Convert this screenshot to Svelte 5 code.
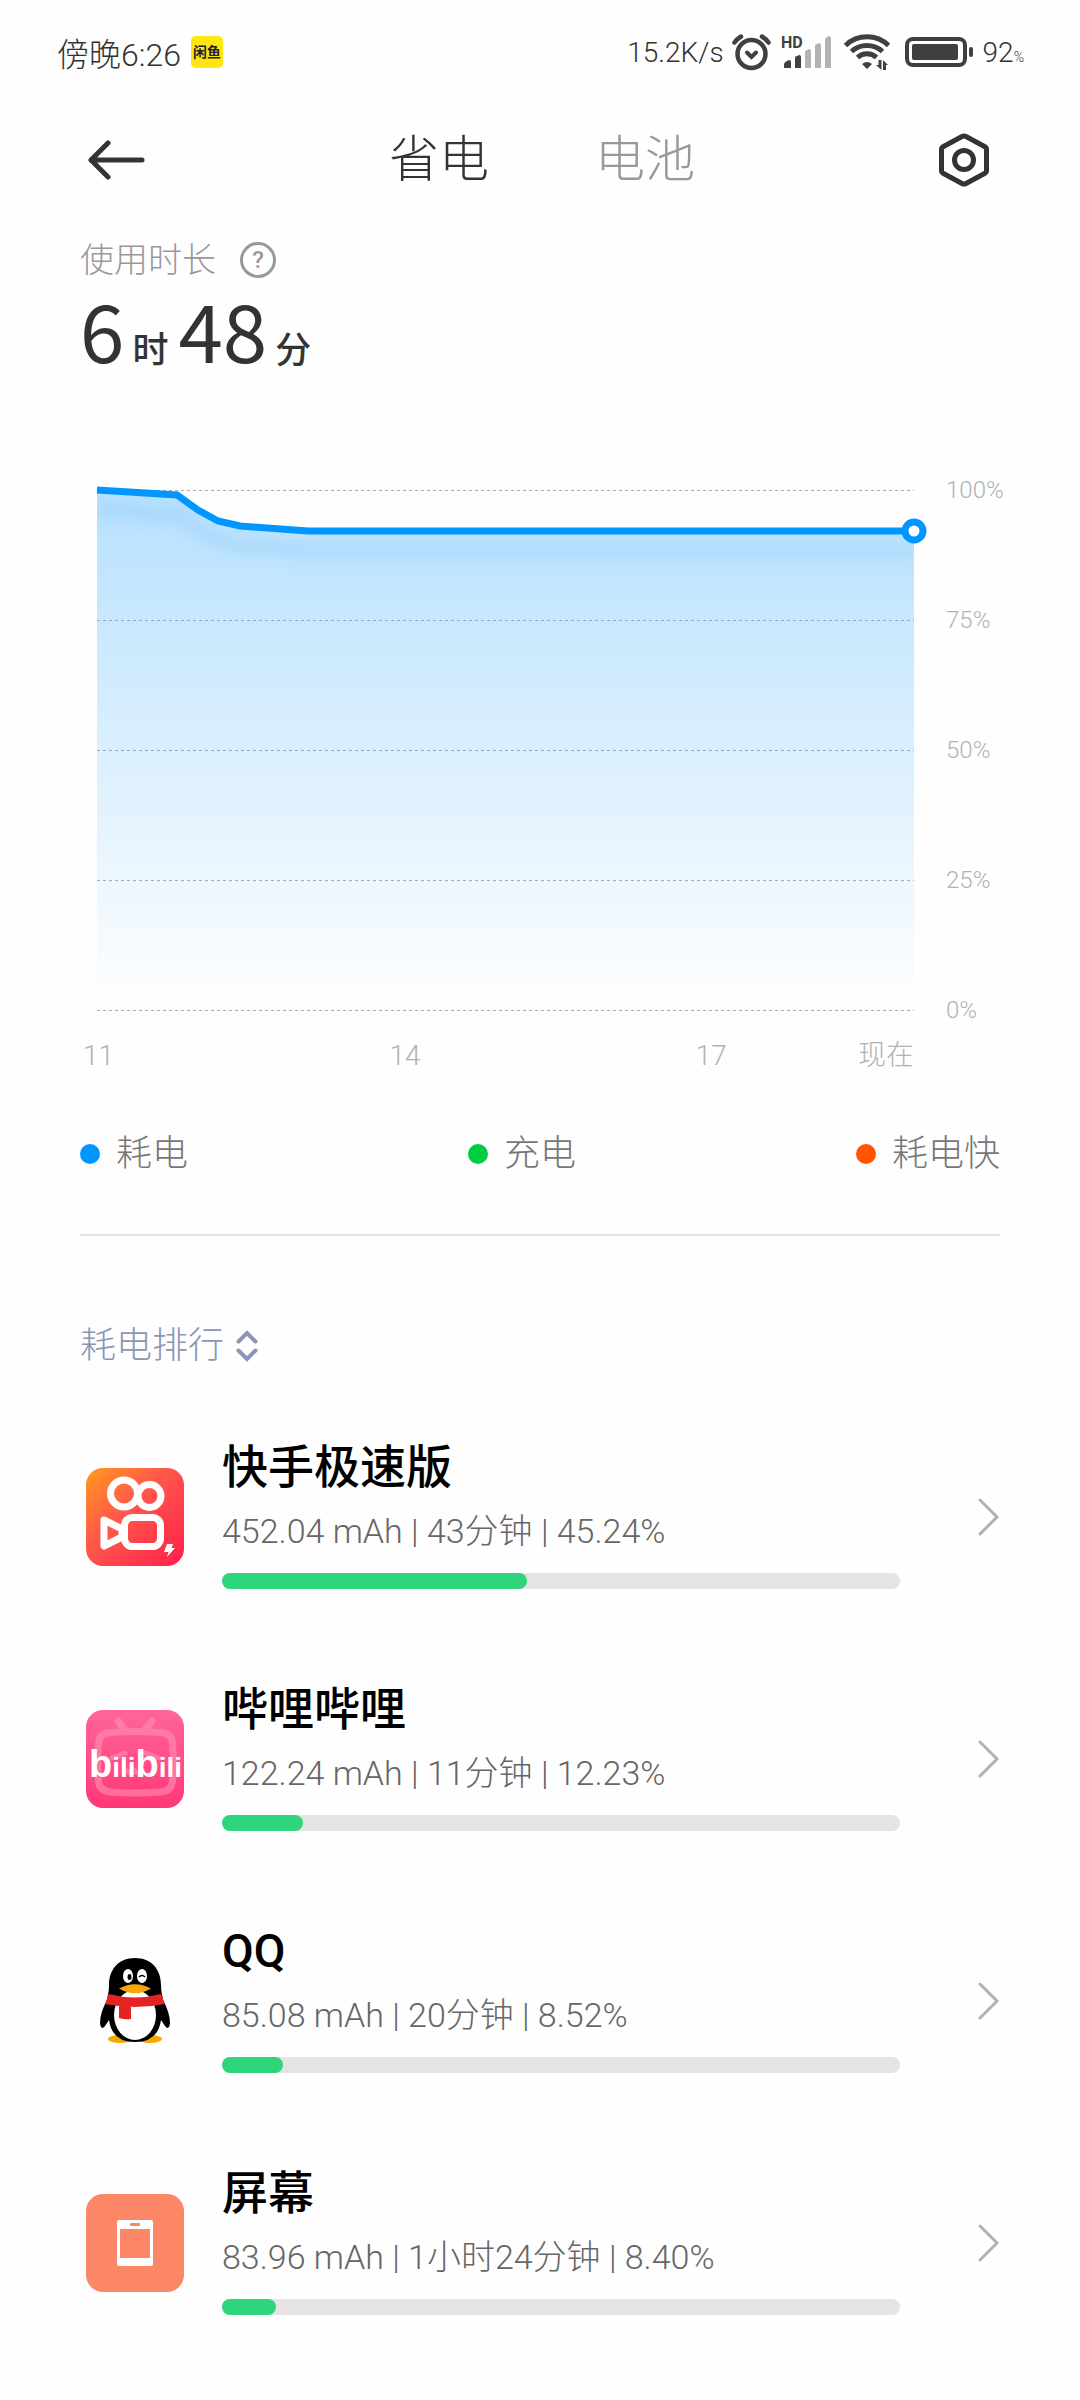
<script lang="ts">
  type App = {
    id: 'kuaishou' | 'bilibili' | 'qq' | 'screen';
    name: string;
    usage: string;
    time: string;
    percent: string;
  };

  const apps: App[] = [
    { id: 'kuaishou', name: '快手极速版', usage: '452.04 mAh', time: '43分钟', percent: '45.24' },
    { id: 'bilibili', name: '哔哩哔哩', usage: '122.24 mAh', time: '11分钟', percent: '12.23' },
    { id: 'qq', name: 'QQ', usage: '85.08 mAh', time: '20分钟', percent: '8.52' },
    { id: 'screen', name: '屏幕', usage: '83.96 mAh', time: '1小时24分钟', percent: '8.40' }
  ];

  const legend = [
    { label: '耗电', kind: 'drain' },
    { label: '充电', kind: 'charge' },
    { label: '耗电快', kind: 'fast' }
  ];

  const tabs = ['省电', '电池'];
  const levels = [100, 75, 50, 25, 0];

  // battery level over time, in plot units
  const points = [
    [0, 0],
    [80, 5],
    [101, 20],
    [121, 31],
    [143, 36],
    [211, 41],
    [817, 41]
  ];
  const line = points.map((p) => p.join(',')).join(' ');
  const area = `${line} 817,520 0,520`;

  let activeTab = '省电';
</script>

<div class="page">
  <div class="status">
    <div class="status-side clock">
      <span>傍晚6:26</span>
      <span class="notice">闲鱼</span>
    </div>
    <div class="status-side">
      <span>15.2K/s</span>
      <svg class="alarm" width="43" height="40" viewBox="0 0 43 40" fill="none" stroke="#404040">
        <circle cx="21.5" cy="22" r="14" stroke-width="4.5" />
        <path d="M17 20.5l4.5 4.5 4.5-4.5" stroke-width="4" stroke-linecap="round" />
        <path d="M4.5 10.5Q7 7 11 4.5M38.5 10.5Q36 7 32 4.5" stroke-width="4.5" stroke-linecap="round" />
      </svg>
      <svg class="signal" width="52" height="42" viewBox="0 -4 52 42">
        <text x="0" y="13" font-size="16" font-weight="700" fill="#404040">HD</text>
        <path d="M3 33v-3q0-3 3-4l2-1q2 0 2 2v6zM14 33V23q0-2 2-2l2-1q2 0 2 2v11z" fill="#404040" />
        <path d="M24 33V17q0-2 2-2l2-1q2 0 2 2v17zM34 33V11q0-2 2-2l2-1q2 0 2 2v23zM44 33V5q0-2 2-3l2-1q2 0 2 2v30z" fill="#b3b3b3" />
      </svg>
      <svg class="wifi" width="48" height="38" viewBox="0 0 48 38">
        <g fill="none" stroke="#404040" stroke-width="5">
          <path d="M2.500 12.500A31 31 0 0 1 45.500 12.500" />
          <path d="M8.500 18.500A23 23 0 0 1 39.500 18.500" />
          <path d="M14.500 24.500A14 14 0 0 1 33.500 24.500" />
        </g>
        <path d="M19 31q5-4 10 0l-5 5zM33 32h2.500v-5h3v10zM40 37V27l5 5h-2v5z" fill="#404040" />
      </svg>
      <svg class="battery" width="70" height="30" viewBox="0 0 70 30">
        <rect x="2" y="2" width="58" height="26" rx="6" fill="none" stroke="#404040" stroke-width="4" />
        <rect x="7" y="7" width="46" height="16" rx="2" fill="#404040" />
        <rect x="64" y="10" width="4" height="10" rx="2" fill="#404040" />
      </svg>
      <span>92<small>%</small></span>
    </div>
  </div>

  <header class="topbar">
    <button class="icon-button" aria-label="返回">
      <svg width="57" height="40" viewBox="0 0 57 40" fill="none" stroke="#333" stroke-width="5" stroke-linecap="round" stroke-linejoin="round">
        <path d="M54 20H3M20 3L3 20l17 17" />
      </svg>
    </button>
    <nav class="tabs">
      {#each tabs as tab}
        <button class="tab" class:active={tab === activeTab} on:click={() => (activeTab = tab)}>{tab}</button>
      {/each}
    </nav>
    <button class="icon-button" aria-label="设置">
      <svg width="50" height="54" viewBox="0 0 50 54" fill="none" stroke="#333" stroke-width="5" stroke-linejoin="round">
        <path d="M23 3.500Q25 2.400 27 3.500L45.500 13.500Q47.500 14.700 47.500 16.500V37.500Q47.500 39.300 45.500 40.500L27 50.500Q25 51.600 23 50.500L4.500 40.500Q2.500 39.300 2.500 37.500V16.500Q2.500 14.700 4.500 13.500Z" />
        <circle cx="25" cy="27" r="9.500" />
      </svg>
    </button>
  </header>

  <main>
    <section>
      <div class="caption">
        <span>使用时长</span>
        <button class="help" aria-label="说明">?</button>
      </div>
      <div class="duration">
        <strong>6</strong><span>时</span><strong>48</strong><span>分</span>
      </div>
    </section>

    <section class="chart">
      <svg class="plot" viewBox="0 0 817 520" role="img" aria-label="电量曲线">
        <defs>
          <linearGradient id="fill" x1="0" y1="0" x2="0" y2="1">
            <stop offset="0" stop-color="#0095ff" stop-opacity="0.28" />
            <stop offset="1" stop-color="#0095ff" stop-opacity="0" />
          </linearGradient>
          <filter id="soft" x="-10%" y="-50%" width="120%" height="250%">
            <feGaussianBlur stdDeviation="6" />
          </filter>
          <clipPath id="under"><polygon points={area} /></clipPath>
        </defs>
        <polygon points={area} fill="url(#fill)" />
        <g clip-path="url(#under)">
          <polyline class="shade" points={line} transform="translate(0 20)" filter="url(#soft)" />
        </g>
        {#each levels as level}
          <line class="grid" x1="0" x2="817" y1={(100 - level) * 5.2 + 0.5} y2={(100 - level) * 5.2 + 0.5} />
        {/each}
        <polyline class="curve" points={line} />
        <circle class="knob" cx="817" cy="41" r="9" />
      </svg>
      <div class="levels">
        {#each levels as level}
          <span>{level}%</span>
        {/each}
      </div>
      <div class="hours">
        <span>11</span>
        <span>14</span>
        <span class="last"><span>17</span><span>现在</span></span>
      </div>
    </section>

    <ul class="legend">
      {#each legend as item}
        <li><i class={item.kind}></i>{item.label}</li>
      {/each}
    </ul>

    <button class="sort">
      耗电排行
      <svg width="22" height="32" viewBox="0 0 22 32" fill="none" stroke="#8b95b5" stroke-width="4" stroke-linecap="round">
        <path d="M2.500 11.500L11 3l8.500 8.500M2.500 20.500L11 29l8.500-8.500" />
      </svg>
    </button>

    <ul class="ranking">
      {#each apps as app}
        <li>
          <button class="app">
            <svg class="app-icon" viewBox="0 0 98 98" width="98" height="98">
              {#if app.id === 'kuaishou'}
                <defs>
                  <linearGradient id="ks" x1="0" y1="0" x2="1" y2="1">
                    <stop offset="0" stop-color="#ff9a1c" />
                    <stop offset="0.400" stop-color="#ff5a4a" />
                    <stop offset="1" stop-color="#ff1f4c" />
                  </linearGradient>
                </defs>
                <rect width="98" height="98" rx="17" fill="url(#ks)" />
                <g fill="none" stroke="#fff" stroke-width="7" stroke-linejoin="round">
                  <circle cx="38" cy="25.500" r="13.500" />
                  <circle cx="63.500" cy="28" r="11.500" />
                  <rect x="38.500" y="49.500" width="36" height="29" rx="8" />
                  <path d="M18 52l18 9v8l-18 9z" />
                </g>
                <path d="M81 76h6l-1.500 4H89l-8 9 1.500-5H78z" fill="#fff" />
              {:else if app.id === 'bilibili'}
                <defs>
                  <linearGradient id="bl" x1="0" y1="0" x2="0" y2="1">
                    <stop offset="0" stop-color="#ff6699" />
                    <stop offset="1" stop-color="#ff3878" />
                  </linearGradient>
                </defs>
                <rect width="98" height="98" rx="17" fill="url(#bl)" />
                <g fill="none" stroke="#ff8fb4" stroke-opacity="0.6" stroke-width="7" stroke-linecap="round">
                  <path d="M32 11l7 9M66 11l-7 9M25 22.500Q49 20.500 74 22.500Q86 23 86.500 33Q88 52 86.500 71Q86 81 74 82Q49 84 25 82Q13 81 12.500 71Q11 52 12.500 33Q13 23 25 22.500Z" />
                  <path d="M26 48l13-5M60 43l13 5M41 61q4 5 8 0q4 5 8 0" stroke-width="5" />
                </g>
                <text x="3" y="67" class="bili"><tspan class="tall">b</tspan>ili<tspan class="tall">b</tspan>ili</text>
              {:else if app.id === 'qq'}
                <ellipse cx="34" cy="87" rx="12" ry="4" fill="#f5a800" />
                <ellipse cx="64" cy="87" rx="12" ry="4" fill="#f5a800" />
                <path d="M49 6C65 6 75 17 75 33C75 39 76 42 77 48Q84 61 84 71Q83 79 79 74L75 68Q72 90 49 90Q26 90 23 68L19 74Q15 79 14 71Q14 61 21 48C22 42 23 39 23 33C23 17 33 6 49 6Z" fill="#000" />
                <ellipse cx="49" cy="63" rx="21" ry="25" fill="#fff" />
                <path d="M23 42Q49 49 75 42L79 52Q49 58 19 52ZM33 53l12 2v12q-6 1-12-1z" fill="#e62323" />
                <ellipse cx="42" cy="24" rx="5" ry="7" fill="#fff" />
                <ellipse cx="56" cy="24" rx="5" ry="7" fill="#fff" />
                <ellipse cx="43.500" cy="25" rx="2" ry="3" fill="#000" />
                <path d="M53 25q3-3 6 0" fill="none" stroke="#000" stroke-width="1.500" />
                <path d="M33 36.500Q49 28 65 36.500Q49 46 33 36.500Z" fill="#f5a800" />
              {:else}
                <rect width="98" height="98" rx="17" fill="#fc8767" />
                <rect x="31" y="26" width="36" height="46" rx="2" fill="#fff" />
                <rect x="34" y="35" width="30" height="29" fill="#fc8767" />
                <rect x="44" y="29" width="10" height="3" rx="1" fill="#fc8767" />
              {/if}
            </svg>
            <span class="info">
              <strong>{app.name}</strong>
              <span class="detail">{app.usage} | {app.time} | {app.percent}%</span>
              <span class="track"><span class="value" style="width: {Math.round(Number(app.percent))}%"></span></span>
            </span>
            <svg width="22" height="38" viewBox="0 0 22 38" fill="none" stroke="#b2b2b2" stroke-width="3" stroke-linecap="round">
              <path d="M2 2l17 17L2 36" />
            </svg>
          </button>
        </li>
      {/each}
    </ul>
  </main>
</div>

<style>
  :global(body) {
    background: #fefefe;
  }

  .page {
    font-family: Roboto, 'Noto Sans CJK SC', sans-serif;
    font-weight: 300;
    color: #333;
  }

  button {
    display: block;
    padding: 0;
    border: 0;
    background: none;
    color: inherit;
    font: inherit;
    text-align: left;
    cursor: pointer;
  }

  svg {
    display: block;
    flex: none;
  }

  ul {
    margin: 0;
    padding: 0;
    list-style: none;
  }

  .status {
    display: flex;
    justify-content: space-between;
    height: 104px;
    padding: 0 56px 0 57px;
    font-size: 28px;
  }

  .status-side {
    display: flex;
    align-items: center;
  }

  .clock {
    font-size: 32px;
  }

  .status small {
    font-size: 14px;
  }

  .notice {
    width: 32px;
    margin-left: 10px;
    border-radius: 5px;
    background: #ffe60f;
    color: #222;
    font-size: 14px;
    font-weight: 700;
    line-height: 32px;
    text-align: center;
  }

  .alarm {
    margin: 0 8px 0 6px;
  }

  .signal {
    margin-right: 10px;
  }

  .wifi {
    margin-right: 14px;
  }

  .battery {
    margin-right: 8px;
  }

  .topbar {
    display: flex;
    align-items: center;
    justify-content: space-between;
    height: 112px;
    padding: 0 91px 0 88px;
  }

  .tabs {
    display: flex;
    gap: 106px;
  }

  .tab {
    color: #999;
    font-size: 50px;
    line-height: 72px;
  }

  .tab.active {
    color: #333;
  }

  main {
    padding: 20px 80px 0;
  }

  .caption {
    display: flex;
    align-items: center;
    gap: 24px;
    height: 48px;
    color: #999;
    font-size: 34px;
    line-height: 48px;
  }

  .help {
    width: 36px;
    height: 36px;
    border: 3px solid #999;
    border-radius: 50%;
    font-size: 24px;
    font-weight: 500;
    line-height: 30px;
    text-align: center;
  }

  .duration {
    display: flex;
    align-items: baseline;
    height: 88px;
    font-family: 'Noto Sans CJK SC', sans-serif;
    font-size: 36px;
    font-weight: 500;
    line-height: 48px;
  }

  .duration strong {
    font-size: 80px;
    font-weight: 400;
    line-height: 88px;
  }

  .duration span {
    margin: 0 10px 0 8px;
  }

  .chart {
    display: grid;
    grid-template-columns: 1fr 60px;
    column-gap: 32px;
    margin-top: 118px;
    padding-left: 17px;
    margin-right: -6px;
    color: #b2b2b2;
    font-size: 24px;
    line-height: 36px;
  }

  .plot {
    width: 100%;
    overflow: visible;
  }

  .grid {
    stroke: #8f9aa3;
    stroke-opacity: 0.8;
    stroke-width: 1;
    stroke-dasharray: 3 3;
  }

  .curve {
    fill: none;
    stroke: #0095ff;
    stroke-width: 7;
  }

  .shade {
    fill: none;
    stroke: #0080e0;
    stroke-opacity: 0.08;
    stroke-width: 18;
  }

  .knob {
    fill: #fff;
    stroke: #0095ff;
    stroke-width: 7;
  }

  .levels {
    display: flex;
    flex-direction: column;
    justify-content: space-between;
    margin: -18px 0;
  }

  .hours {
    display: grid;
    grid-template-columns: 3fr 3fr 2fr;
    margin-top: 28px;
    font-size: 28px;
  }

  .hours > span {
    margin-left: -14px;
  }

  .last {
    display: flex;
    justify-content: space-between;
  }

  .legend {
    display: flex;
    justify-content: space-between;
    margin-top: 56px;
    padding-bottom: 56px;
    border-bottom: 2px solid #e4e4e4;
    color: #777;
    font-size: 36px;
    line-height: 48px;
  }

  .legend li {
    display: flex;
    align-items: center;
    gap: 16px;
  }

  .legend i {
    width: 20px;
    height: 20px;
    border-radius: 50%;
  }

  .drain {
    background: #0095ff;
  }

  .charge {
    background: #00cc44;
  }

  .fast {
    background: #ff5500;
  }

  .sort {
    display: flex;
    align-items: center;
    gap: 12px;
    margin-top: 86px;
    color: #8b95b5;
    font-size: 36px;
    line-height: 48px;
  }

  .ranking {
    margin-top: 26px;
  }

  .app {
    display: flex;
    align-items: center;
    width: 100%;
    height: 242px;
    padding: 0 0 0 6px;
  }

  .info {
    flex: 1;
    margin: 0 78px 0 38px;
    padding-bottom: 10px;
    line-height: 64px;
  }

  .info strong {
    display: block;
    color: #000;
    font-size: 46px;
    font-weight: 500;
  }

  .detail {
    display: block;
    color: #666;
    font-size: 34px;
  }

  .track {
    display: block;
    height: 16px;
    margin-top: 10px;
    border-radius: 8px;
    background: #e4e4e4;
  }

  .value {
    display: block;
    height: 16px;
    border-radius: 8px;
    background: #2ed57c;
  }

  .bili {
    fill: #fff;
    font-family: 'Liberation Sans', sans-serif;
    font-size: 28px;
    font-weight: 700;
  }

  .tall {
    font-size: 38px;
  }
</style>
